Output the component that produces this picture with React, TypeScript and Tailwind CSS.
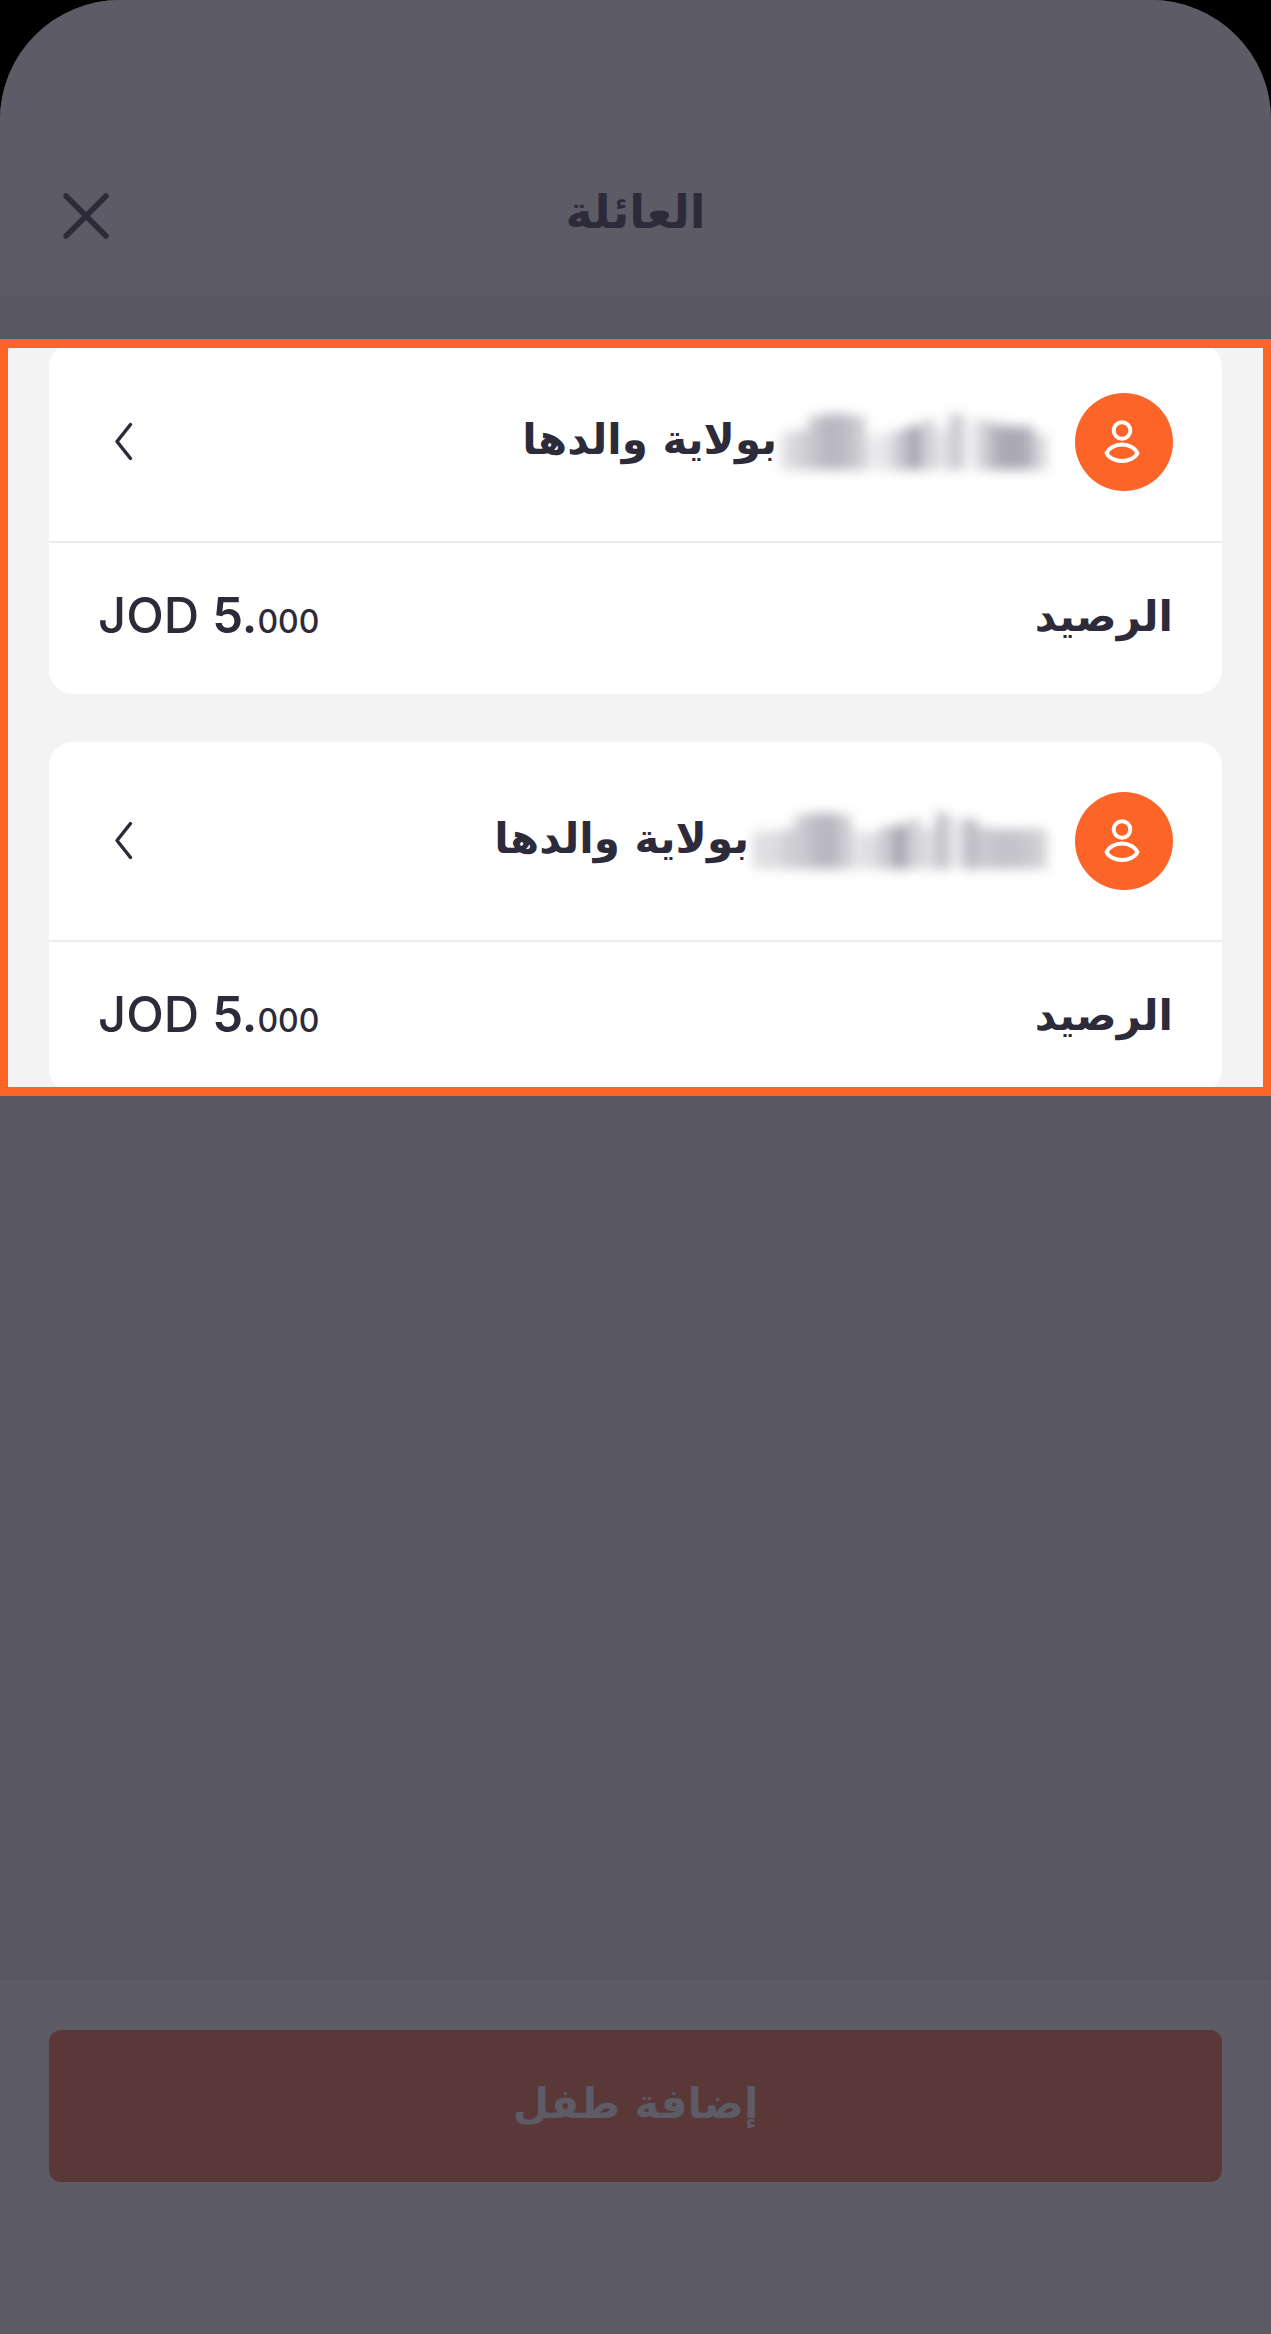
import React from "react";

type Account = {
  id: number;
  // [height, opacity] of each stripe hiding the child's name, right to left
  mask: [number, number][];
  currency: string;
  whole: string;
  fraction: string;
};

const accounts: Account[] = [
  {
    id: 1,
    mask: [
      [36, 0.3], [44, 0.6], [44, 0.65], [46, 0.6], [50, 0.35], [52, 0.1], [56, 0.4],
      [40, 0.2], [50, 0.35], [44, 0.65], [40, 0.4], [36, 0.2], [36, 0.15], [54, 0.4],
      [56, 0.5], [56, 0.55], [54, 0.45], [40, 0.35], [38, 0.25],
    ],
    currency: "JOD",
    whole: "5",
    fraction: "000",
  },
  {
    id: 2,
    mask: [
      [40, 0.35], [40, 0.42], [40, 0.45], [40, 0.45], [42, 0.4], [50, 0.5], [50, 0.15],
      [56, 0.45], [40, 0.25], [50, 0.35], [44, 0.65], [42, 0.4], [36, 0.25], [38, 0.2],
      [54, 0.4], [56, 0.55], [56, 0.5], [54, 0.4], [40, 0.35], [38, 0.25], [38, 0.25],
    ],
    currency: "JOD",
    whole: "5",
    fraction: "000",
  },
];

const CloseIcon = () => (
  <svg
    className="h-[46px] w-[46px]"
    viewBox="0 0 46 46"
    fill="none"
    stroke="currentColor"
    strokeWidth="5.500"
    strokeLinecap="round"
  >
    <path d="M3 3L43 43M43 3L3 43" />
  </svg>
);

const ChevronIcon = () => (
  <svg
    className="h-10 w-5"
    viewBox="0 0 20 40"
    fill="none"
    stroke="currentColor"
    strokeWidth="3.500"
    strokeLinecap="round"
    strokeLinejoin="round"
  >
    <path d="M16.500 2.500L3 19.500L16.500 36.500" />
  </svg>
);

const PersonIcon = () => (
  <svg
    className="h-11 w-11"
    viewBox="2 0 44 44"
    fill="none"
    stroke="currentColor"
    strokeWidth="4"
    strokeLinejoin="round"
  >
    <circle cx="22" cy="10.5" r="8.300" />
    <path d="M6.500 33C8.500 28.500 15 24.500 22 24.500S35.500 28.500 37.500 33C35.500 37.500 29 41 22 41S8.500 37.500 6.500 33Z" />
  </svg>
);

const HiddenName = ({ mask }: { mask: [number, number][] }) => (
  <span className="flex h-14 items-end px-1 blur-[6px]" aria-hidden="true">
    {mask.map(([height, opacity], index) => (
      <span key={index} className="w-[14px] bg-[#7b7a88]" style={{ height, opacity }} />
    ))}
  </span>
);

const AccountCard = ({ account }: { account: Account }) => (
  <article className="overflow-hidden rounded-3xl bg-white">
    <button className="flex h-[198px] w-full cursor-pointer items-center px-[49px]">
      <span className="flex h-[98px] w-[98px] shrink-0 items-center justify-center rounded-full bg-[#fc6428] text-white">
        <PersonIcon />
      </span>
      <span className="ms-6 flex items-center">
        <HiddenName mask={account.mask} />
        <span className="pb-1 text-[42px] leading-[60px] font-bold">بولاية والدها</span>
      </span>
      <span className="ms-auto me-4">
        <ChevronIcon />
      </span>
    </button>
    <div className="flex h-[153px] items-center justify-between border-t-2 border-[#ececec] px-[49px]">
      <span className="pb-1 text-[42px] leading-[60px] font-bold">الرصيد</span>
      <span
        dir="ltr"
        className="font-['Inter',sans-serif] text-[49px] leading-[60px] font-medium"
      >
        {account.currency} <span className="font-semibold">{account.whole}.</span>
        <span className="text-[32px]">{account.fraction}</span>
      </span>
    </div>
  </article>
);

const App = () => {
  return (
    <div className="min-h-screen bg-black">
      <div
        dir="rtl"
        className="flex min-h-screen flex-col overflow-hidden rounded-t-[120px] bg-[#595862] font-['DejaVu_Sans',sans-serif] text-[#2d2b3a]"
      >
        {/* Header */}
        <header className="bg-[#5c5b66] pt-40 pb-6">
          <div className="grid h-28 grid-cols-[1fr_auto_1fr] items-center px-[63px]">
            <h1 className="col-start-2 pb-2 text-[46px] leading-[60px] font-bold">العائلة</h1>
            <button className="cursor-pointer justify-self-end" aria-label="إغلاق">
              <CloseIcon />
            </button>
          </div>
        </header>

        {/* Highlighted accounts */}
        <main className="grow pt-[43px]">
          <section className="overflow-hidden border-x-8 border-y-9 border-[#fc6428] bg-[#f3f3f3] px-[41px]">
            <div className="-mt-[5px] -mb-[6px] flex flex-col gap-12">
              {accounts.map((account) => (
                <AccountCard key={account.id} account={account} />
              ))}
            </div>
          </section>
        </main>

        {/* Add child */}
        <footer className="border-t-2 border-[#575660] bg-[#5c5b66] px-[49px] pt-[50px] pb-[152px]">
          <button className="h-[152px] w-full cursor-pointer rounded-xl bg-[#5a3837] pb-1 text-[42px] leading-[60px] font-bold text-[#5c5b66]">
            إضافة طفل
          </button>
        </footer>
      </div>
    </div>
  );
};

export default App;
